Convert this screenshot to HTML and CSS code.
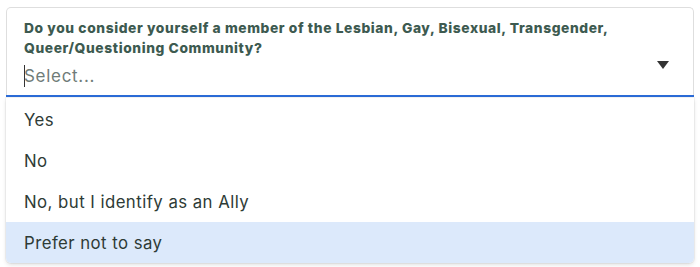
FILE: index.html
```html
<!DOCTYPE html>
<html lang="en">
<head>
<meta charset="utf-8">
<link rel="stylesheet" href="styles.css">
</head>
<body>
<div class="wrap">
  <div class="field">
    <label class="label">Do you consider yourself a member of the Lesbian, Gay, Bisexual, Transgender,<br>Queer/Questioning Community?</label>
    <div class="control">
      <span class="caret"></span><span class="placeholder">Select...</span>
      <svg class="arrow" width="12" height="8" viewBox="0 0 12 8"><path d="M0 0H12L6 8Z" fill="#333"/></svg>
    </div>
  </div>
  <div class="menu">
    <div class="option">Yes</div>
    <div class="option">No</div>
    <div class="option">No, but I identify as an Ally</div>
    <div class="option active">Prefer not to say</div>
  </div>
</div>
</body>
</html>
```
FILE: styles.css
```css
html, body {
  margin: 0;
  padding: 0;
  background: #fff;
}
body {
  font-family: Inter, "Noto Sans", sans-serif;
  width: 700px;
  height: 267px;
  overflow: hidden;
}
.wrap {
  padding: 7px 6px 0 6px;
}
.field {
  border: 1px solid #dedede;
  border-bottom: none;
  border-radius: 5px 5px 0 0;
  padding: 10px 17px 0 17px;
}
.label {
  display: block;
  font-size: 13.8px;
  font-weight: 800;
  line-height: 20px;
  letter-spacing: 0.6px;
  color: #3d5a50;
  white-space: nowrap;
}
.control {
  display: flex;
  align-items: center;
  height: 35px;
  border-bottom: 2px solid #2b6bd6;
  margin: 0 -18px;
  padding: 0 18px 2px 18px;
}
.caret {
  width: 1px;
  height: 22px;
  background: #333;
  margin-right: -1px;
}
.placeholder {
  font-size: 17px;
  letter-spacing: 0.7px;
  color: #6f7c78;
}
.arrow {
  margin-left: auto;
  margin-right: 7px;
  align-self: flex-start;
  margin-top: 3px;
}
.menu {
  margin-top: 1px;
  padding-top: 1px;
  background: #fff;
  border-radius: 0 0 5px 5px;
  box-shadow: 0 2px 4px rgba(0,0,0,0.12), 0 0 0 1px rgba(0,0,0,0.04);
  overflow: hidden;
}
.option {
  height: 41px;
  display: flex;
  align-items: center;
  padding-left: 18px;
  font-size: 16.8px;
  letter-spacing: 0.45px;
  color: #2e3b36;
}
.option.active {
  background: #dce9fb;
}
```
